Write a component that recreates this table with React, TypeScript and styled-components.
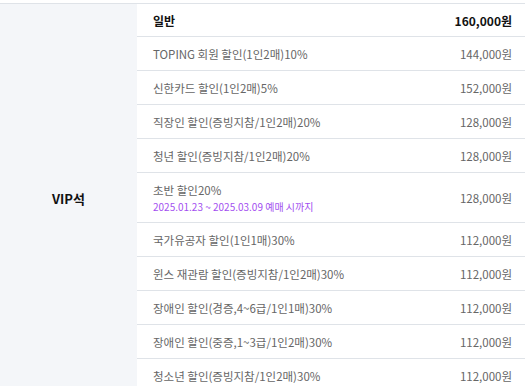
import styled, { createGlobalStyle } from "styled-components";

const GlobalStyle = createGlobalStyle`
  body {
    margin: 0;
    background: #ffffff;
    font-family: "Noto Sans CJK KR", "Noto Sans", sans-serif;
  }
`;

type Price = {
  name: string;
  price: string;
  note?: string;
};

const prices: Price[] = [
  { name: "TOPING 회원 할인(1인2매)10%", price: "144,000원" },
  { name: "신한카드 할인(1인2매)5%", price: "152,000원" },
  { name: "직장인 할인(증빙지참/1인2매)20%", price: "128,000원" },
  { name: "청년 할인(증빙지참/1인2매)20%", price: "128,000원" },
  {
    name: "초반 할인20%",
    price: "128,000원",
    note: "2025.01.23 ~ 2025.03.09 예매 시까지",
  },
  { name: "국가유공자 할인(1인1매)30%", price: "112,000원" },
  { name: "윈스 재관람 할인(증빙지참/1인2매)30%", price: "112,000원" },
  { name: "장애인 할인(경증,4~6급/1인1매)30%", price: "112,000원" },
  { name: "장애인 할인(중증,1~3급/1인2매)30%", price: "112,000원" },
  { name: "청소년 할인(증빙지참/1인2매)30%", price: "112,000원" },
];

const App = () => {
  return (
    <>
      <GlobalStyle />
      <Page>
        <PriceTable>
          <SeatCell>VIP석</SeatCell>
          <RowList>
            <Row $head>
              <Name $head>일반</Name>
              <Amount $head>160,000원</Amount>
            </Row>
            {prices.map((p) => (
              <Row key={p.name} $tall={!!p.note}>
                <NameBlock>
                  <Name>{p.name}</Name>
                  {p.note && <Note>{p.note}</Note>}
                </NameBlock>
                <Amount>{p.price}</Amount>
              </Row>
            ))}
          </RowList>
        </PriceTable>
      </Page>
    </>
  );
};

export const Page = styled.div`
  padding-top: 3px;
`;

export const PriceTable = styled.div`
  display: flex;
  border-top: 1px solid #dfe3e8;
`;

export const SeatCell = styled.div`
  width: 137px;
  flex-shrink: 0;
  display: flex;
  align-items: center;
  justify-content: center;
  background: #f4f6f9;
  font-size: 13px;
  font-weight: 700;
  color: #111;
`;

export const RowList = styled.div`
  flex: 1;
  display: flex;
  flex-direction: column;
`;

export const Row = styled.div<{ $head?: boolean; $tall?: boolean }>`
  display: flex;
  align-items: center;
  justify-content: space-between;
  height: ${(p) => (p.$head ? 32 : p.$tall ? 49 : 33)}px;
  padding: 0 13px 0 16px;
  border-bottom: 1px solid #dfe3e8;
`;

export const NameBlock = styled.div`
  display: flex;
  flex-direction: column;
  gap: 1px;
`;

export const Name = styled.span<{ $head?: boolean }>`
  font-size: ${(p) => (p.$head ? 12 : 11.5)}px;
  font-weight: ${(p) => (p.$head ? 700 : 400)};
  color: ${(p) => (p.$head ? "#111" : "#666")};
`;

export const Note = styled.span`
  font-size: 10px;
  color: #a34ff0;
`;

export const Amount = styled.span<{ $head?: boolean }>`
  font-size: ${(p) => (p.$head ? 12 : 11.5)}px;
  font-weight: ${(p) => (p.$head ? 700 : 400)};
  color: ${(p) => (p.$head ? "#111" : "#666")};
`;

export default App;
